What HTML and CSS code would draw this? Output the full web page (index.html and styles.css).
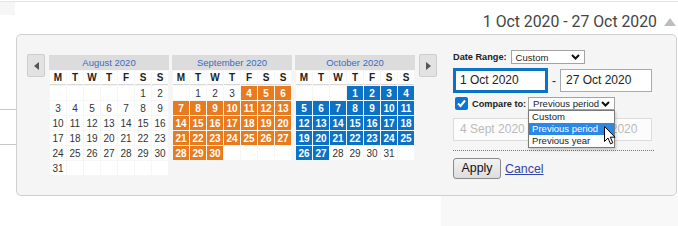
FILE: index.html
```html
<!DOCTYPE html>
<html lang="en">
<head>
  <meta charset="UTF-8" />
  <title>Date range picker</title>
  <link rel="stylesheet" href="styles.css">
</head>
<body>

<div class="topline"></div>

<!-- Selected range heading -->
<div class="header">
  <div class="corner"></div>
  <div class="range-title">1 Oct 2020 - 27 Oct 2020</div>
  <svg class="caret" width="12" height="8" viewBox="0 0 12 8"><path d="M0 8 L6 0 L12 8 Z" fill="#bdbdbd"/></svg>
</div>

<div class="stage">
  <div class="gutter"><span></span><span></span></div>

  <div class="panel">
    <!-- Calendars -->
    <div class="calendars">
      <div class="nav">
        <svg width="5" height="8" viewBox="0 0 5 8"><path d="M5 0 L0 4 L5 8 Z" fill="#555"/></svg>
      </div>
      <div class="months" id="months"></div>
      <div class="nav">
        <svg width="5" height="8" viewBox="0 0 5 8"><path d="M0 0 L5 4 L0 8 Z" fill="#555"/></svg>
      </div>
    </div>

    <!-- Range form -->
    <div class="form">
      <div class="row">
        <span class="label">Date Range:</span>
        <span class="select select-range">
          Custom
          <svg class="chev" width="9" height="6" viewBox="0 0 9 6"><path d="M1 1 L4.5 4.5 L8 1" fill="none" stroke="#111" stroke-width="2"/></svg>
        </span>
      </div>

      <div class="row row-dates">
        <span class="date-input active">1 Oct 2020</span>
        <span class="dash">-</span>
        <span class="date-input">27 Oct 2020</span>
      </div>

      <div class="row row-compare">
        <span class="checkbox">
          <svg width="13" height="13" viewBox="0 0 13 13"><path d="M3 6.5 L5.5 9 L10 3.5" fill="none" stroke="#fff" stroke-width="2"/></svg>
        </span>
        <span class="label">Compare to:</span>
        <span class="select-wrap">
          <span class="select select-compare">
            Previous period
            <svg class="chev" width="9" height="6" viewBox="0 0 9 6"><path d="M1 1 L4.5 4.5 L8 1" fill="none" stroke="#111" stroke-width="2"/></svg>
          </span>
          <div class="dropdown">
            <div class="option">Custom</div>
            <div class="option selected">Previous period</div>
            <div class="option">Previous year</div>
          </div>
          <svg class="cursor" width="12" height="19" viewBox="0 0 12 19">
            <path d="M0.5 0.5 L0.5 15.5 L4 12 L6.5 17.8 L8.8 16.8 L6.3 11.2 L11 11.2 Z" fill="#fff" stroke="#000" stroke-width="1"/>
          </svg>
        </span>
      </div>

      <div class="row row-dates compare-dates">
        <span class="date-input muted">4 Sept 2020</span>
        <span class="dash muted-dash">-</span>
        <span class="date-input muted">30 Sept 2020</span>
      </div>

      <div class="divider"></div>

      <div class="row row-actions">
        <span class="apply-btn">Apply</span>
        <a href="#" class="cancel-link">Cancel</a>
      </div>
    </div>
  </div>
</div>

<div class="below">
  <div class="below-left"></div>
  <div class="below-right"></div>
</div>

<script>
  // Build the three month tables
  const months = [
    { name: 'August 2020', first: 5, days: 31, from: 0, to: 0, range: '' },
    { name: 'September 2020', first: 1, days: 30, from: 4, to: 30, range: 'in-compare' },
    { name: 'October 2020', first: 3, days: 31, from: 1, to: 27, range: 'in-range' }
  ];
  const dow = ['M', 'T', 'W', 'T', 'F', 'S', 'S'];

  function buildMonth(m) {
    const box = document.createElement('div');
    box.className = 'month';

    const title = document.createElement('div');
    title.className = 'month-title';
    title.textContent = m.name;
    box.appendChild(title);

    const table = document.createElement('table');
    table.className = 'month-table';
    let html = '<tr>' + dow.map(d => '<th>' + d + '</th>').join('') + '</tr>';

    const rows = Math.ceil((m.first + m.days) / 7);
    let day = 1 - m.first;
    for (let r = 0; r < rows; r++) {
      html += '<tr>';
      for (let c = 0; c < 7; c++, day++) {
        if (day < 1 || day > m.days) {
          html += '<td></td>';
        } else if (day >= m.from && day <= m.to) {
          html += '<td class="' + m.range + '">' + day + '</td>';
        } else {
          html += '<td>' + day + '</td>';
        }
      }
      html += '</tr>';
    }
    table.innerHTML = html;
    box.appendChild(table);
    return box;
  }

  const container = document.getElementById('months');
  months.forEach(m => container.appendChild(buildMonth(m)));
</script>

</body>
</html>
```

FILE: styles.css
```css
* {
  margin: 0;
  padding: 0;
  box-sizing: border-box;
}

body {
  background: #fff;
  font-family: 'Liberation Sans', Arial, sans-serif;
  color: #333;
  width: 678px;
  height: 226px;
  overflow: hidden;
}

.topline {
  margin-top: 1px;
  height: 1px;
  background: #e6e6e6;
}

/* Header */
.header {
  display: flex;
  align-items: flex-start;
  height: 32px;
}

.corner {
  width: 15px;
  height: 13px;
  background: #f6f6f6;
}

.range-title {
  margin-left: auto;
  padding-top: 10px;
  font-family: Roboto, 'Liberation Sans', sans-serif;
  font-size: 15.8px;
  line-height: 20px;
  color: #444;
}

.caret {
  margin: 16px 2px 0 7px;
}

/* Stage with background lines */
.stage {
  display: flex;
  height: 162px;
}

.gutter {
  width: 16px;
  flex-shrink: 0;
}

.gutter span {
  display: block;
  height: 1px;
  background: #c8c8c8;
  margin-top: 75px;
}

.gutter span + span {
  margin-top: 34px;
}

.panel {
  width: 661px;
  height: 162px;
  display: flex;
  align-items: flex-start;
  background: #f5f5f5;
  border: 1px solid #cfcfcf;
  border-radius: 5px;
  padding: 15px 0 15px 10px;
}

/* Calendars */
.calendars {
  display: flex;
  align-items: flex-start;
  gap: 4px;
  margin-top: 5px;
}

.nav {
  width: 18px;
  height: 23px;
  margin-top: -1px;
  background: #e2e2e2;
  border: 1px solid #cdcdcd;
  border-radius: 2px;
  display: flex;
  align-items: center;
  justify-content: center;
}

.months {
  display: flex;
  gap: 3px;
}

.month {
  width: 120px;
}

.month-title {
  height: 15px;
  line-height: 15px;
  background: #dcdcdc;
  color: #3a6cc2;
  font-size: 9.5px;
  text-align: center;
}

.month-table {
  width: 120px;
  border-collapse: separate;
  border-spacing: 1px;
  background: #f6f6f6;
}

.month-table th,
.month-table td {
  width: 16px;
  height: 14px;
  padding: 0;
  font-size: 10px;
  line-height: 13px;
  text-align: center;
  background: #fff;
  color: #333;
}

.month-table th {
  font-weight: bold;
  color: #222;
  border-bottom: 1px solid #d8d8d8;
}

.month-table td.in-compare {
  background: #e97b1f;
  color: #fff;
  font-weight: bold;
}

.month-table td.in-range {
  background: #0b72c6;
  color: #fff;
  font-weight: bold;
}

/* Form */
.form {
  margin-left: 16px;
  width: 201px;
}

.row {
  display: flex;
  align-items: center;
}

.label {
  font-size: 9.2px;
  font-weight: bold;
  color: #222;
}

.select {
  position: relative;
  display: flex;
  align-items: center;
  height: 14px;
  padding-left: 4px;
  background: #fff;
  border: 1px solid #a3a3a3;
  font-size: 9.5px;
  color: #222;
}

.select .chev {
  position: absolute;
  right: 4px;
  top: 3px;
}

.select-range {
  width: 74px;
  margin-left: 4px;
}

.row-dates {
  margin-top: 4px;
}

.date-input {
  width: 92px;
  height: 23px;
  line-height: 21px;
  padding-left: 5px;
  background: #fff;
  border: 1px solid #a9a9a9;
  font-size: 12px;
  color: #222;
}

.date-input.active {
  width: 95px;
  height: 25px;
  line-height: 19px;
  padding-left: 4px;
  border: 3px solid #0b72c6;
}

.dash {
  width: 12px;
  text-align: center;
  font-size: 12px;
  color: #222;
}

.row-compare {
  margin-top: 4px;
}

.checkbox {
  width: 13px;
  height: 13px;
  margin-left: 2px;
  margin-right: 4px;
  background: #0b74d6;
  border-radius: 2px;
  display: flex;
}

.select-wrap {
  position: relative;
  margin-left: 2px;
}

.select-compare {
  width: 87px;
  height: 13px;
}

.dropdown {
  position: absolute;
  top: 13px;
  left: 0;
  width: 87px;
  background: #fff;
  border: 1px solid #7a7a7a;
  box-shadow: 1px 2px 3px rgba(0, 0, 0, 0.2);
  z-index: 5;
}

.option {
  height: 12px;
  line-height: 12px;
  padding-left: 3px;
  font-size: 9.5px;
  color: #222;
}

.option.selected {
  background: #2b88e6;
  color: #fff;
}

.cursor {
  position: absolute;
  left: 76px;
  top: 29px;
  z-index: 6;
}

.compare-dates {
  margin-top: 8px;
}

.date-input.muted {
  background: #fcfcfc;
  border-color: #dcdcdc;
  color: #bbb;
}

.compare-dates .date-input.muted:first-child {
  width: 95px;
  padding-left: 6px;
}

.muted-dash {
  color: #bbb;
}

.divider {
  margin-top: 9px;
  border-top: 1px dotted #777;
}

.row-actions {
  margin-top: 7px;
  gap: 4px;
}

.apply-btn {
  width: 48px;
  height: 21px;
  line-height: 19px;
  text-align: center;
  font-size: 12.4px;
  color: #111;
  background: linear-gradient(#f3f3f3, #dddddd);
  border: 1px solid #8a8a8a;
  border-radius: 3px;
}

.cancel-link {
  font-size: 12.4px;
  color: #3344aa;
  text-decoration: underline;
}

/* Page area below the panel */
.below {
  display: flex;
  height: 40px;
}

.below-left {
  width: 441px;
  background: #fff;
}

.below-right {
  flex: 1;
  background: #f8f8f8;
}
```
